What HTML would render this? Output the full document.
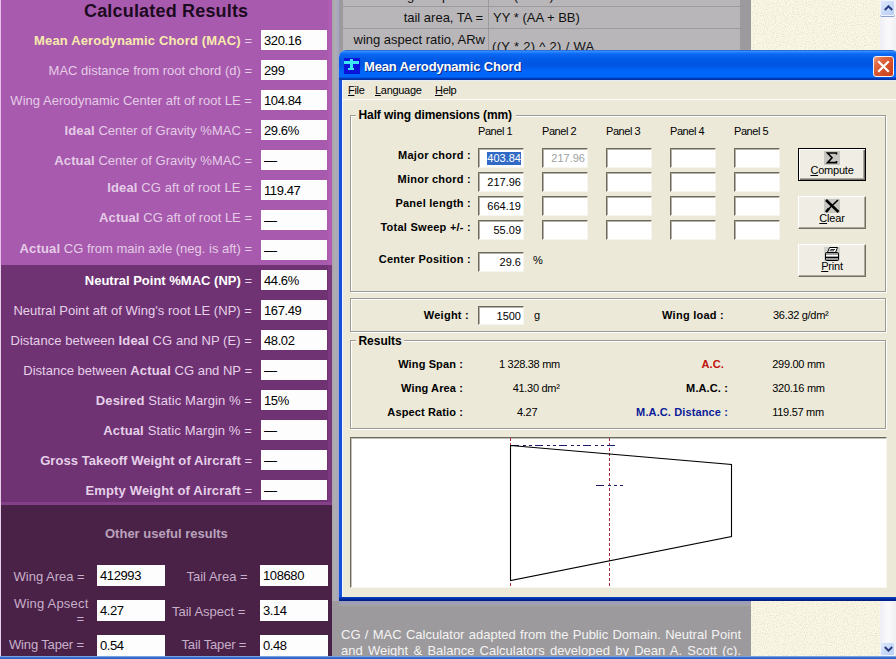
<!DOCTYPE html>
<html><head><meta charset="utf-8">
<style>
*{margin:0;padding:0;box-sizing:border-box}
html,body{width:896px;height:659px;overflow:hidden;background:#9c9a9c;font-family:"Liberation Sans",sans-serif}
.a{position:absolute;white-space:nowrap}
#left{position:absolute;left:0;top:0;width:332px;height:659px;overflow:hidden}
.sec{position:absolute;left:0;width:332px}
.lb{position:absolute;right:80px;font-size:13px;line-height:13px;color:#e4cce6;white-space:nowrap;text-align:right}
.lb b,.lb.bb{font-weight:bold;letter-spacing:0.15px}
.ib{position:absolute;left:261px;width:66px;height:20px;background:#fdfdfd;font-size:13px;color:#000;padding-left:3px}
.ib span{position:absolute;left:3px;letter-spacing:-0.4px}
.dk .lb{color:#e6d0e8}
/* table bg */
#tbl{position:absolute;left:332px;top:0;width:419px;height:659px;background:#9c9a9c}
.cell{position:absolute;background:#b8b6b8}
.ttx{position:absolute;font-size:13px;line-height:13px;color:#111;white-space:nowrap}
#cream{position:absolute;left:751px;top:0;width:129px;height:659px;background:#f9f6e0}
#sb{position:absolute;left:880px;top:0;width:16px;height:659px;background:linear-gradient(90deg,#eeeef4,#fafafc 50%,#f0f0f4)}
/* window */
#win{position:absolute;left:339px;top:50px;width:560px;height:551px;background:#ece9d8;border-radius:7px 7px 0 0;overflow:hidden}
#title{position:absolute;left:0;top:0;width:560px;height:30px;background:linear-gradient(#1a48b0 0px,#3c94ff 1px,#2484fe 2px,#0c68f2 4px,#005ce8 9px,#0054e0 14px,#005ae8 17px,#0066fa 21px,#0068fc 27px,#0040c4 28px,#00309c 30px)}
.tt{position:absolute;left:25px;top:10px;font-size:13px;font-weight:bold;color:#fff;line-height:13px;letter-spacing:-0.15px;text-shadow:1px 1px 0 #0a2a8a}
#wl{position:absolute;left:0;top:30px;width:3px;height:521px;background:#1650d8;box-shadow:1px 0 0 #eef6ff}
#wb{position:absolute;left:0;top:547px;width:560px;height:4px;background:linear-gradient(#0a40c8,#002898 60%,#001c80)}
.menu{position:absolute;top:34.5px;font-size:11px;line-height:11px;color:#000;letter-spacing:-0.3px}
.gb{position:absolute;border:1px solid #9d9c94;box-shadow:inset 1px 1px 0 #fff,1px 1px 0 #fff}
.gt{position:absolute;background:#ece9d8;font-size:12px;font-weight:bold;line-height:12px;padding:0 2px;color:#000}
.wl{position:absolute;font-size:11px;line-height:11px;font-weight:bold;color:#000;white-space:nowrap;text-align:right}
.wv{position:absolute;font-size:11px;line-height:11px;color:#000;white-space:nowrap}
.ed{position:absolute;width:46px;height:20px;background:#fff;border-top:1px solid #6c6a5e;border-left:1px solid #6c6a5e;border-right:1px solid #f6f5ee;border-bottom:1px solid #f6f5ee;box-shadow:inset 1px 1px 0 #b4b2a8;font-size:11px;line-height:15px;text-align:right;padding-right:2px;color:#000}
.btn{position:absolute;left:798px;width:68px;height:33px;background:#f0eee4;border:1px solid;border-color:#fff #716f64 #716f64 #fff;box-shadow:inset -1px -1px 0 #aca899;font-size:11px;text-align:center}
.btn .ico{position:absolute;left:25px;top:2px;width:16px;height:14px;line-height:0}
.btn .bt{position:absolute;left:0;width:100%;top:16px;line-height:11px;letter-spacing:-0.2px}
.sel{background:#316ac5;color:#fff;padding:0 0 1px 0}
.ed.em{background:#fff}
.btn.def{border:1px solid #000;box-shadow:inset 1px 1px 0 #fff,inset -1px -1px 0 #716f64,inset -2px -2px 0 #aca899}
.cv{position:absolute;background:#fff;border-top:1px solid #6c6a5e;border-left:1px solid #6c6a5e;border-right:1px solid #f8f7f0;border-bottom:1px solid #f8f7f0;box-shadow:inset 1px 1px 0 #c4c2b8}
.ed{line-height:14px;padding-top:2px}
</style></head><body>
<div id="tbl">
  <div class="cell" style="left:11px;top:-20px;width:145px;height:26px"></div>
  <div class="cell" style="left:157px;top:-20px;width:251px;height:26px"></div>
  <div class="cell" style="left:11px;top:7px;width:145px;height:21px"></div>
  <div class="cell" style="left:157px;top:7px;width:251px;height:21px"></div>
  <div class="cell" style="left:11px;top:29px;width:145px;height:40px"></div>
  <div class="cell" style="left:157px;top:29px;width:251px;height:40px"></div>
  <div class="ttx" style="left:75px;top:-11px">g</div>
  <div class="ttx" style="left:110px;top:-11px">p</div>
  <div class="ttx" style="left:161px;top:-11px">Y * (A + B)</div>
  <div class="ttx" style="right:268px;top:11px">tail area, TA =</div>
  <div class="ttx" style="left:161px;top:11px">YY * (AA + BB)</div>
  <div class="ttx" style="left:21.5px;top:33px">wing aspect ratio, ARw</div>
  <div class="ttx" style="left:160px;top:40px;letter-spacing:0.3px">((Y * 2) ^ 2) / WA</div>
  <div class="ttx" style="left:9px;top:627px;width:400px;color:#f4f4f4;text-align:justify;text-align-last:justify;white-space:normal;line-height:16px;font-size:13px">CG / MAC Calculator adapted from the Public Domain. Neutral Point and Weight &amp; Balance Calculators developed by Dean A. Scott (c).</div>
</div>
<div id="cream"><svg width="129" height="659" style="position:absolute;left:0;top:0"><filter id="nz" x="0" y="0" width="100%" height="100%"><feTurbulence type="fractalNoise" baseFrequency="0.9" numOctaves="1" seed="3"/><feColorMatrix values="0 0 0 0 0.55  0 0 0 0 0.53  0 0 0 0 0.4  0 0 0 -2.2 1.25"/></filter><rect width="129" height="659" fill="#fbf9e6"/><rect width="129" height="659" filter="url(#nz)" opacity="0.5"/></svg></div>
<div id="sb"><div class="a" style="left:0;top:0;width:15px;height:16px;border-radius:2px;background:linear-gradient(135deg,#dce8fc,#b8cdf4);border:1px solid #f0f4fc;box-shadow:0 1px 0 #8aa0d0"><svg class="a" style="left:3px;top:4px" width="9" height="6" viewBox="0 0 9 6"><path d="M0.8 5L4.5 1.3L8.2 5" fill="none" stroke="#2a3c80" stroke-width="2"/></svg></div><div class="a" style="left:0;top:642px;width:15px;height:14px;border-radius:2px;background:linear-gradient(135deg,#dce8fc,#b8cdf4);border:1px solid #f0f4fc"><svg class="a" style="left:3px;top:3px" width="9" height="6" viewBox="0 0 9 6"><path d="M0.8 1L4.5 4.7L8.2 1" fill="none" stroke="#2a3c80" stroke-width="2"/></svg></div></div>

<div id="left">
  <div class="sec" style="top:0;height:265px;background:#a85aae">
    <div class="a" style="left:0;top:0;width:1px;height:265px;background:#e8c0ea"></div>
    <div class="a" style="left:84px;top:2px;font-size:18px;font-weight:bold;color:#1c0b20;line-height:18px;letter-spacing:0.18px">Calculated Results</div>
    <div class="lb" style="top:34px"><b style="color:#f8eaae">Mean Aerodynamic Chord (MAC)</b> =</div>
    <div class="ib" style="top:30px"><span style="top:3px">320.16</span></div>
    <div class="lb" style="top:64px">MAC distance from root chord (d) =</div>
    <div class="ib" style="top:60px"><span style="top:3px">299</span></div>
    <div class="lb" style="top:94px;letter-spacing:0.035px">Wing Aerodynamic Center aft of root LE =</div>
    <div class="ib" style="top:90px"><span style="top:3px">104.84</span></div>
    <div class="lb" style="top:124px"><b>Ideal</b> Center of Gravity %MAC =</div>
    <div class="ib" style="top:120px"><span style="top:3px">29.6%</span></div>
    <div class="lb" style="top:154px"><b>Actual</b> Center of Gravity %MAC =</div>
    <div class="ib" style="top:150px"><span style="top:3px">—</span></div>
    <div class="lb" style="top:181px;letter-spacing:0.1px"><b>Ideal</b> CG aft of root LE =</div>
    <div class="ib" style="top:180px"><span style="top:3px">119.47</span></div>
    <div class="lb" style="top:211px"><b>Actual</b> CG aft of root LE =</div>
    <div class="ib" style="top:210px"><span style="top:3px">—</span></div>
    <div class="lb" style="top:242px"><b>Actual</b> CG from main axle (neg. is aft) =</div>
    <div class="ib" style="top:240px"><span style="top:3px">—</span></div>
  </div>
  <div class="sec dk" style="top:265px;height:240px;background:#6f3374">
    <div class="lb" style="top:9px"><b style="color:#fff;letter-spacing:0">Neutral Point %MAC (NP)</b> =</div>
    <div class="ib" style="top:5px"><span style="top:3px">44.6%</span></div>
    <div class="lb" style="top:39px;letter-spacing:0.04px">Neutral Point aft of Wing's root LE (NP) =</div>
    <div class="ib" style="top:35px"><span style="top:3px">167.49</span></div>
    <div class="lb" style="top:69px;letter-spacing:0.067px">Distance between <b>Ideal</b> CG and NP (E) =</div>
    <div class="ib" style="top:65px"><span style="top:3px">48.02</span></div>
    <div class="lb" style="top:99px">Distance between <b>Actual</b> CG and NP =</div>
    <div class="ib" style="top:95px"><span style="top:3px">—</span></div>
    <div class="lb" style="top:129px;letter-spacing:0.09px"><b>Desired</b> Static Margin % =</div>
    <div class="ib" style="top:125px"><span style="top:3px">15%</span></div>
    <div class="lb" style="top:159px;letter-spacing:0.125px"><b>Actual</b> Static Margin % =</div>
    <div class="ib" style="top:155px"><span style="top:3px">—</span></div>
    <div class="lb" style="top:189px"><b style="letter-spacing:0.07px">Gross Takeoff Weight of Aircraft</b> =</div>
    <div class="ib" style="top:185px"><span style="top:3px">—</span></div>
    <div class="lb" style="top:219px"><b>Empty Weight of Aircraft</b> =</div>
    <div class="ib" style="top:215px"><span style="top:3px">—</span></div>
  </div>
  <div class="sec" style="top:505px;height:154px;background:#4a2147">
    <div class="a" style="left:105px;top:22px;font-size:13px;font-weight:bold;color:#b9a2bb;line-height:13px">Other useful results</div>
    <div class="a" style="left:13.5px;top:65px;font-size:13px;color:#c7b0c9;line-height:13px">Wing Area =</div>
    <div class="ib" style="left:97px;top:60px;width:68px;height:21px"><span style="top:3px">412993</span></div>
    <div class="a" style="left:186.5px;top:65px;font-size:13px;color:#c7b0c9;line-height:13px">Tail Area =</div>
    <div class="ib" style="left:260px;top:60px;width:68px;height:21px"><span style="top:3px">108680</span></div>
    <div class="a" style="left:14px;top:92px;font-size:13px;color:#c7b0c9;line-height:13px;letter-spacing:0.2px">Wing Apsect</div>
    <div class="a" style="left:76.5px;top:107px;font-size:13px;color:#c7b0c9;line-height:13px">=</div>
    <div class="ib" style="left:97px;top:95px;width:68px;height:21px"><span style="top:3px">4.27</span></div>
    <div class="a" style="left:172px;top:100px;font-size:13px;color:#c7b0c9;line-height:13px">Tail Aspect =</div>
    <div class="ib" style="left:260px;top:95px;width:68px;height:21px"><span style="top:3px">3.14</span></div>
    <div class="a" style="left:9px;top:132.5px;font-size:13px;color:#c7b0c9;line-height:13px;letter-spacing:-0.15px">Wing Taper =</div>
    <div class="ib" style="left:97px;top:130px;width:68px;height:21px"><span style="top:3px">0.54</span></div>
    <div class="a" style="left:181.5px;top:133px;font-size:13px;color:#c7b0c9;line-height:13px;letter-spacing:-0.15px">Tail Taper =</div>
    <div class="ib" style="left:260px;top:130px;width:68px;height:21px"><span style="top:3px">0.48</span></div>
  </div>
</div>
<div class="a" style="left:328px;top:0;width:4px;height:265px;background:#b05cb4"></div>
<div class="a" style="left:328px;top:265px;width:4px;height:240px;background:#7a387e"></div>
<div class="a" style="left:0;top:502px;width:332px;height:3px;background:#844088"></div>
<div class="a" style="left:332px;top:0;width:7px;height:601px;background:linear-gradient(90deg,#a8a4a8,#b0aeb0 40%,#a8a8b8 80%,#9ca4d8)"></div>
<div class="a" style="left:339px;top:601px;width:412px;height:5px;background:linear-gradient(#9a9ab8,#a0a0b8 60%,#a4a498)"></div>
<div class="a" style="left:0;top:265px;width:1px;height:391px;background:#e8d0ea"></div>
<div class="a" style="left:0;top:656px;width:896px;height:3px;background:linear-gradient(#78a4e4 0,#78a4e4 1px,#3a70cc 1px,#2e62c0)"></div>

<div id="win">
  <div id="title">
    <svg class="a" style="left:5px;top:8px" width="16" height="16" viewBox="0 0 16 16"><rect width="16" height="16" fill="#0a14d8"/><rect x="0" y="3" width="15" height="3" fill="#3ee6f4"/><rect x="6" y="1" width="3" height="10" fill="#3ee6f4"/><rect x="4" y="10" width="6" height="2" fill="#3ee6f4"/></svg>
    <div class="tt">Mean Aerodynamic Chord</div>
    <div class="a" style="left:534px;top:6px;width:21px;height:21px;border-radius:3px;border:1px solid #f4f0f0;background:linear-gradient(135deg,#f0a080 0%,#e06a44 25%,#d8522c 55%,#c8401c 100%)"><svg class="a" style="left:0;top:0" width="19" height="19" viewBox="0 0 19 19"><path d="M5 5L14 14M14 5L5 14" stroke="#fff" stroke-width="2.2" stroke-linecap="square"/></svg></div>
  </div>
  <div id="wl"></div>
  <div id="wb"></div>
  <div class="a" style="left:4px;top:30px;width:556px;height:1px;background:#e4ecf8"></div>
  <div class="a" style="left:4px;top:49px;width:556px;height:1px;background:#fffff8"></div>
  <div class="menu" style="left:9px"><u>F</u>ile</div>
  <div class="menu" style="left:36px"><u>L</u>anguage</div>
  <div class="menu" style="left:96px"><u>H</u>elp</div>
</div>
<div id="wc">
<div class="gb" style="left:350px;top:115px;width:536px;height:177px"></div>
<div class="a" style="left:356px;top:108px;width:160px;height:14px;background:#ece9d8"></div>
<div class="a" style="left:358.5px;top:109.4px;font-size:12px;line-height:12px;font-weight:bold;letter-spacing:-0.1px;color:#000;">Half wing dimensions (mm)</div>
<div class="a" style="left:478px;top:125.9px;font-size:11px;line-height:11px;font-weight:normal;letter-spacing:-0.45px;color:#000;">Panel 1</div>
<div class="a" style="left:542px;top:125.9px;font-size:11px;line-height:11px;font-weight:normal;letter-spacing:-0.45px;color:#000;">Panel 2</div>
<div class="a" style="left:606px;top:125.9px;font-size:11px;line-height:11px;font-weight:normal;letter-spacing:-0.45px;color:#000;">Panel 3</div>
<div class="a" style="left:670px;top:125.9px;font-size:11px;line-height:11px;font-weight:normal;letter-spacing:-0.45px;color:#000;">Panel 4</div>
<div class="a" style="left:734px;top:125.9px;font-size:11px;line-height:11px;font-weight:normal;letter-spacing:-0.45px;color:#000;">Panel 5</div>
<div class="a" style="right:425px;top:149.7px;font-size:11px;line-height:11px;font-weight:bold;letter-spacing:0.25px;color:#000;">Major chord :</div>
<div class="ed" style="left:478px;top:148px"><span class="sel">403.84</span></div>
<div class="ed" style="left:542px;top:148px"><span style="color:#a0a0a0">217.96</span></div>
<div class="ed em" style="left:606px;top:148px"></div>
<div class="ed em" style="left:670px;top:148px"></div>
<div class="ed em" style="left:734px;top:148px"></div>
<div class="a" style="right:425px;top:173.7px;font-size:11px;line-height:11px;font-weight:bold;letter-spacing:0.25px;color:#000;">Minor chord :</div>
<div class="ed" style="left:478px;top:172px">217.96</div>
<div class="ed em" style="left:542px;top:172px"></div>
<div class="ed em" style="left:606px;top:172px"></div>
<div class="ed em" style="left:670px;top:172px"></div>
<div class="ed em" style="left:734px;top:172px"></div>
<div class="a" style="right:425px;top:197.7px;font-size:11px;line-height:11px;font-weight:bold;letter-spacing:0.25px;color:#000;">Panel length :</div>
<div class="ed" style="left:478px;top:196px">664.19</div>
<div class="ed em" style="left:542px;top:196px"></div>
<div class="ed em" style="left:606px;top:196px"></div>
<div class="ed em" style="left:670px;top:196px"></div>
<div class="ed em" style="left:734px;top:196px"></div>
<div class="a" style="right:425px;top:221.7px;font-size:11px;line-height:11px;font-weight:bold;letter-spacing:0.25px;color:#000;">Total Sweep +/- :</div>
<div class="ed" style="left:478px;top:220px">55.09</div>
<div class="ed em" style="left:542px;top:220px"></div>
<div class="ed em" style="left:606px;top:220px"></div>
<div class="ed em" style="left:670px;top:220px"></div>
<div class="ed em" style="left:734px;top:220px"></div>
<div class="a" style="right:425px;top:254.2px;font-size:11px;line-height:11px;font-weight:bold;letter-spacing:0.25px;color:#000;">Center Position :</div>
<div class="ed" style="left:478px;top:252px">29.6</div>
<div class="a" style="left:533px;top:255.2px;font-size:11px;line-height:11px;font-weight:normal;color:#000;">%</div>
<div class="btn def" style="top:148px;height:33px"><div class="ico"><svg width="16" height="14" viewBox="0 0 16 14"><rect width="16" height="14" fill="#c8c6c0"/><path d="M12.5 3.5V2H3.5L8 6.8L3.5 11.6H12.5V10" fill="none" stroke="#000" stroke-width="1.6" stroke-linejoin="miter"/></svg></div><div class="bt"><u>C</u>ompute</div></div>
<div class="btn" style="top:196px"><div class="ico"><svg width="16" height="14" viewBox="0 0 16 14"><rect width="16" height="14" fill="#c8c6c0"/><path d="M2 1L14.5 13" stroke="#000" stroke-width="2.6"/><path d="M14 1L4 10.5" stroke="#000" stroke-width="1.6"/><path d="M5 9.5L2 13" stroke="#000" stroke-width="2.6"/></svg></div><div class="bt"><u>C</u>lear</div></div>
<div class="btn" style="top:244px"><div class="ico"><svg width="16" height="14" viewBox="0 0 16 14"><rect width="16" height="14" fill="#d4d2cc"/><path d="M5.5 0.5H13.5L11.5 5.5H3.5Z" fill="#fff" stroke="#000"/><path d="M6.5 2.5H11M5.5 3.8H10" stroke="#000" stroke-width="0.8"/><path d="M1.5 6.5Q1.5 5.5 2.5 5.5H13.5Q14.5 5.5 14.5 6.5V12.5Q14.5 13.5 13.5 13.5H2.5Q1.5 13.5 1.5 12.5Z" fill="#9a9a9a" stroke="#000"/><path d="M2 8.5H14" stroke="#fff" stroke-width="1.2"/><path d="M2 10.5H14" stroke="#000" stroke-width="1"/></svg></div><div class="bt"><u>P</u>rint</div></div>
<div class="gb" style="left:350px;top:298px;width:536px;height:34px"></div>
<div class="a" style="right:427px;top:310.2px;font-size:11px;line-height:11px;font-weight:bold;letter-spacing:0.25px;color:#000;">Weight :</div>
<div class="ed" style="left:478px;top:306px;height:19px">1500</div>
<div class="a" style="left:534px;top:310.2px;font-size:11px;line-height:11px;font-weight:normal;color:#000;">g</div>
<div class="a" style="right:172px;top:309.7px;font-size:11px;line-height:11px;font-weight:bold;letter-spacing:0.25px;color:#000;">Wing load :</div>
<div class="a" style="left:773px;top:309.7px;font-size:11px;line-height:11px;font-weight:normal;letter-spacing:-0.3px;color:#000;">36.32 g/dm²</div>
<div class="gb" style="left:350px;top:340px;width:536px;height:89px"></div>
<div class="a" style="left:356px;top:333px;width:48px;height:14px;background:#ece9d8"></div>
<div class="a" style="left:358.4px;top:335.4px;font-size:12px;line-height:12px;font-weight:bold;color:#000;">Results</div>
<div class="a" style="right:433px;top:358.7px;font-size:11px;line-height:11px;font-weight:bold;letter-spacing:0.12px;color:#000;">Wing Span :</div>
<div class="a" style="left:499px;top:358.7px;font-size:11px;line-height:11px;font-weight:normal;letter-spacing:-0.3px;color:#000;">1 328.38 mm</div>
<div class="a" style="right:172px;top:358.7px;font-size:11px;line-height:11px;font-weight:bold;letter-spacing:0.12px;color:#c01010;">A.C.</div>
<div class="a" style="left:772.3px;top:358.7px;font-size:11px;line-height:11px;font-weight:normal;letter-spacing:-0.3px;color:#000;">299.00 mm</div>
<div class="a" style="right:433px;top:382.7px;font-size:11px;line-height:11px;font-weight:bold;letter-spacing:0.12px;color:#000;">Wing Area :</div>
<div class="a" style="left:512.7px;top:382.7px;font-size:11px;line-height:11px;font-weight:normal;letter-spacing:-0.3px;color:#000;">41.30 dm²</div>
<div class="a" style="right:168px;top:382.7px;font-size:11px;line-height:11px;font-weight:bold;letter-spacing:0.12px;color:#000;">M.A.C. :</div>
<div class="a" style="left:772.3px;top:382.7px;font-size:11px;line-height:11px;font-weight:normal;letter-spacing:-0.3px;color:#000;">320.16 mm</div>
<div class="a" style="right:433px;top:406.7px;font-size:11px;line-height:11px;font-weight:bold;letter-spacing:0.12px;color:#000;">Aspect Ratio :</div>
<div class="a" style="left:517px;top:406.7px;font-size:11px;line-height:11px;font-weight:normal;letter-spacing:-0.3px;color:#000;">4.27</div>
<div class="a" style="right:168px;top:406.7px;font-size:11px;line-height:11px;font-weight:bold;letter-spacing:0.12px;color:#0a1a9a;">M.A.C. Distance :</div>
<div class="a" style="left:772.3px;top:406.7px;font-size:11px;line-height:11px;font-weight:normal;letter-spacing:-0.3px;color:#000;">119.57 mm</div>
<div class="cv" style="left:350px;top:437px;width:537px;height:151px"></div>
<svg class="a" style="left:0;top:0" width="896" height="659" viewBox="0 0 896 659">
<g fill="none" stroke-width="1" shape-rendering="crispEdges">
<line x1="510.5" y1="438" x2="510.5" y2="587" stroke="#b82838" stroke-dasharray="3,2"/>
<line x1="609.5" y1="438" x2="609.5" y2="587" stroke="#a02838" stroke-dasharray="3,2"/>
<line x1="511" y1="445.5" x2="616" y2="445.5" stroke="#1a1a68" stroke-dasharray="8,4,3,3,3,3"/>
<line x1="596" y1="485.5" x2="623" y2="485.5" stroke="#1a1a68" stroke-dasharray="8,4,3,3,3,3"/>
</g><g fill="none" stroke-width="1.1"><polygon points="510.5,445.5 731.5,464.5 731.5,536.5 510.5,580.5" stroke="#000"/>
</g></svg>
</div>
</body></html>
